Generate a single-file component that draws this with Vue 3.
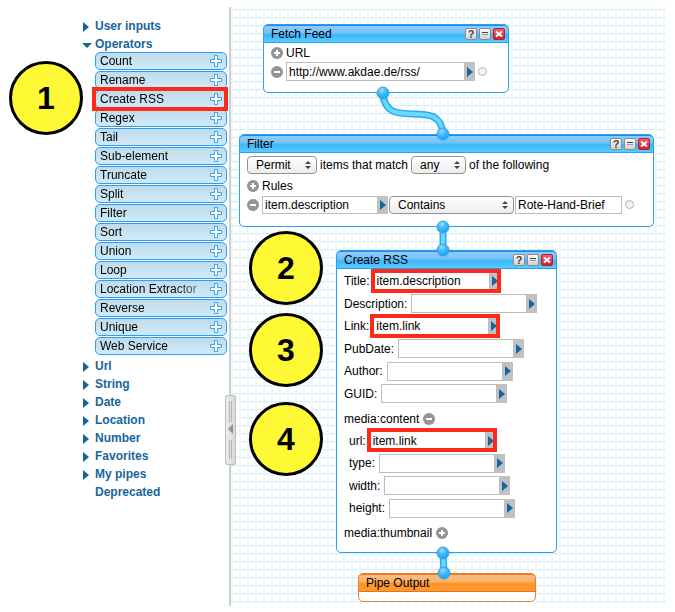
<script setup>
import { ref, reactive } from 'vue'

const operators = ['Count', 'Rename', 'Create RSS', 'Regex', 'Tail', 'Sub-element', 'Truncate', 'Split', 'Filter', 'Sort', 'Union', 'Loop', 'Location Extractor', 'Reverse', 'Unique', 'Web Service']
const categories = ['Url', 'String', 'Date', 'Location', 'Number', 'Favorites', 'My pipes']
const open = ref(true)

const feedUrl = ref('http://www.akdae.de/rss/')
const mode = ref('Permit')
const match = ref('any')
const rule = reactive({ field: 'item.description', op: 'Contains', value: 'Rote-Hand-Brief' })
const fields = reactive([
  { label: 'Title', value: 'item.description', marked: true },
  { label: 'Description', value: '' },
  { label: 'Link', value: 'item.link', marked: true },
  { label: 'PubDate', value: '' },
  { label: 'Author', value: '' },
  { label: 'GUID', value: '' }
])
const media = reactive([
  { label: 'url', value: 'item.link', marked: true },
  { label: 'type', value: '' },
  { label: 'width', value: '' },
  { label: 'height', value: '' }
])
const modules = [
  { id: 'fetch', title: 'Fetch Feed' },
  { id: 'filter', title: 'Filter' },
  { id: 'rss', title: 'Create RSS' },
  { id: 'output', title: 'Pipe Output' }
]
const ports = [[152, 86], [212, 127], [212, 220], [212, 243], [212, 546], [213, 566]]
const wires = ['M152 86C154 127 209 87 212 127', 'M212 220V243', 'M212 546L213 566']
</script>

<template>
  <div class="page">
    <nav class="sidebar">
      <button class="cat" type="button">
        <svg class="tri" viewBox="0 0 10 10"><path d="M1 0L7 5L1 10Z" /></svg>User inputs
      </button>
      <button class="cat" type="button" @click="open = !open">
        <svg class="tri" viewBox="0 0 10 10"><path d="M0 3H10L5 8Z" /></svg>Operators
      </button>
      <ul v-if="open" class="ops">
        <li v-for="op in operators" :key="op">
          <button type="button" class="op" :class="{ marked: op === 'Create RSS' }">
            <span class="op-name">{{ op }}</span>
            <svg class="plus" viewBox="0 0 12 12"><path d="M4.500 .5H7.500V4.500H11.500V7.500H7.500V11.500H4.500V7.500H.5V4.500H4.500Z" /></svg>
          </button>
        </li>
      </ul>
      <button v-for="c in categories" :key="c" class="cat" type="button">
        <svg class="tri" viewBox="0 0 10 10"><path d="M1 0L7 5L1 10Z" /></svg>{{ c }}
      </button>
      <button class="cat" type="button"><span class="tri"></span>Deprecated</button>
    </nav>

    <div class="divider">
      <button class="handle" type="button" aria-label="Collapse">
        <svg viewBox="0 0 11 70">
          <path d="M4.500 6V27M6.500 6V27M4.500 45V64M6.500 45V64" stroke="#b4b4b4" />
          <path d="M8 29V39L3 34Z" fill="#929292" />
        </svg>
      </button>
    </div>

    <main class="canvas">
      <section v-for="m in modules" :key="m.id" class="module" :class="m.id">
        <header class="head">
          <h2>{{ m.title }}</h2>
          <div v-if="m.id !== 'output'" class="tools">
            <button type="button" class="tool" aria-label="Help">?</button>
            <button type="button" class="tool" aria-label="Minimize">
              <svg viewBox="0 0 10 10"><path d="M2 3.500H8" stroke="#444" /><path d="M2 5.500H8" stroke="#999" /></svg>
            </button>
            <button type="button" class="tool close" aria-label="Close">
              <svg viewBox="0 0 10 10"><path d="M2 2.500L8 7.500M8 2.500L2 7.500" stroke="#fff" stroke-width="2" fill="none" /></svg>
            </button>
          </div>
        </header>

        <div v-if="m.id === 'fetch'" class="body">
          <div class="row">
            <button class="round" type="button" aria-label="Add URL"><svg viewBox="0 0 12 12"><circle cx="6" cy="6" r="6" /><path d="M6 3V9M3 6H9" /></svg></button>
            <label for="feed">URL</label>
          </div>
          <div class="row">
            <button class="round" type="button" aria-label="Remove URL"><svg viewBox="0 0 12 12"><circle cx="6" cy="6" r="6" /><path d="M3 6H9" /></svg></button>
            <span class="field wide"><input id="feed" v-model="feedUrl" type="text"><button class="go" type="button" aria-label="Choose"><svg viewBox="0 0 6 10"><path d="M0 0L6 5L0 10Z" /></svg></button></span>
            <span class="socket"></span>
          </div>
        </div>

        <div v-else-if="m.id === 'filter'" class="body">
          <div class="row match">
            <span class="pick mode"><select v-model="mode" aria-label="Mode"><option>Permit</option><option>Block</option></select><svg viewBox="0 0 6 8"><path d="M0 3L3 0L6 3ZM0 5L3 8L6 5Z" /></svg></span>
            <span>items that match</span>
            <span class="pick any"><select v-model="match" aria-label="Match"><option>any</option><option>all</option></select><svg viewBox="0 0 6 8"><path d="M0 3L3 0L6 3ZM0 5L3 8L6 5Z" /></svg></span>
            <span>of the following</span>
          </div>
          <div class="row">
            <button class="round" type="button" aria-label="Add rule"><svg viewBox="0 0 12 12"><circle cx="6" cy="6" r="6" /><path d="M6 3V9M3 6H9" /></svg></button>
            <span>Rules</span>
          </div>
          <div class="row">
            <button class="round" type="button" aria-label="Remove rule"><svg viewBox="0 0 12 12"><circle cx="6" cy="6" r="6" /><path d="M3 6H9" /></svg></button>
            <div class="rule">
              <span class="field"><input v-model="rule.field" type="text" aria-label="Field"><button class="go" type="button" aria-label="Choose"><svg viewBox="0 0 6 10"><path d="M0 0L6 5L0 10Z" /></svg></button></span>
              <span class="pick test"><select v-model="rule.op" aria-label="Test"><option>Contains</option><option>Matches</option></select><svg viewBox="0 0 6 8"><path d="M0 3L3 0L6 3ZM0 5L3 8L6 5Z" /></svg></span>
              <span class="field value"><input v-model="rule.value" type="text" aria-label="Value"></span>
            </div>
            <span class="socket"></span>
          </div>
        </div>

        <div v-else-if="m.id === 'rss'" class="body">
          <div v-for="f in fields" :key="f.label" class="row">
            <label :for="f.label">{{ f.label }}:</label>
            <span class="field" :class="{ marked: f.marked }"><input :id="f.label" v-model="f.value" type="text"><button class="go" type="button" aria-label="Choose"><svg viewBox="0 0 6 10"><path d="M0 0L6 5L0 10Z" /></svg></button></span>
          </div>
          <div class="row group">
            <span>media:content</span>
            <button class="round" type="button" aria-label="Collapse content"><svg viewBox="0 0 12 12"><circle cx="6" cy="6" r="6" /><path d="M3 6H9" /></svg></button>
          </div>
          <div v-for="f in media" :key="f.label" class="row nested">
            <label :for="f.label">{{ f.label }}:</label>
            <span class="field" :class="{ marked: f.marked }"><input :id="f.label" v-model="f.value" type="text"><button class="go" type="button" aria-label="Choose"><svg viewBox="0 0 6 10"><path d="M0 0L6 5L0 10Z" /></svg></button></span>
          </div>
          <div class="row group">
            <span>media:thumbnail</span>
            <button class="round" type="button" aria-label="Expand thumbnail"><svg viewBox="0 0 12 12"><circle cx="6" cy="6" r="6" /><path d="M6 3V9M3 6H9" /></svg></button>
          </div>
        </div>
        <div v-else class="body"></div>
      </section>

      <svg class="wires">
        <defs>
          <radialGradient id="ball" cx="40%" cy="28%" r="70%">
            <stop offset="0" stop-color="#9bdcff" />
            <stop offset=".5" stop-color="#3db8fb" />
            <stop offset="1" stop-color="#1ea4f6" />
          </radialGradient>
        </defs>
        <template v-for="w in wires" :key="w">
          <path :d="w" stroke="#37a3ee" stroke-width="7" />
          <path :d="w" stroke="#63dcff" stroke-width="4" />
        </template>
        <circle v-for="(p, i) in ports" :key="i" :cx="p[0]" :cy="p[1]" r="6" fill="url(#ball)" stroke="#35a2f0" />
      </svg>

      <span class="step s2">2</span>
      <span class="step s3">3</span>
      <span class="step s4">4</span>
    </main>
    <span class="step s1">1</span>
  </div>
</template>

<style>
body { margin: 0; background: #fff; }
</style>

<style scoped>
.page {
  position: relative;
  display: flex;
  box-sizing: border-box;
  min-height: 100vh;
  padding: 7px 9px 6px 0;
  font: 12px/18px "Liberation Sans", Arial, sans-serif;
  color: #000;
}
button, input, select { font: inherit; color: inherit; margin: 0; padding: 0; border: 0; background: none; box-sizing: border-box; }
svg { display: block; }

.sidebar { flex: none; width: 229px; box-sizing: border-box; padding: 10px 2px 0 82px; }
.cat { display: flex; align-items: center; gap: 3px; width: 100%; padding-top: 1px; line-height: 17px; font-weight: bold; color: #17659d; text-align: left; }
.tri { width: 10px; height: 10px; fill: #17659d; }
.ops { list-style: none; margin: -1px 0 2px 13px; padding: 0; display: grid; gap: 1px; }
.op {
  position: relative;
  display: flex;
  align-items: center;
  justify-content: space-between;
  width: 100%;
  height: 18px;
  padding: 0 4px;
  border: 1px solid #2a9df4;
  border-radius: 5px;
  background: linear-gradient(#bfdae8, #cfeafa);
  line-height: 16px;
}
.op-name { width: 104px; text-align: left; white-space: nowrap; mask-image: linear-gradient(90deg, #000 70%, transparent 115%); }
.plus { width: 12px; height: 12px; fill: #fff; stroke: #3da3ee; }
.marked { position: relative; }
.marked::after { content: ""; position: absolute; inset: -3px -1px -2px -3px; border: 4px solid #fd2a1b; pointer-events: none; }
.op.marked { z-index: 1; }
.op.marked::after { inset: -4px -2px -4px -4px; }

.divider { position: relative; flex: none; width: 2px; background: #cfcfd1; }
.handle { position: absolute; z-index: 2; left: -4px; top: 388px; width: 11px; height: 70px; border-radius: 3px; background: linear-gradient(90deg, #eee, #d6d6d6); box-shadow: inset 0 0 0 1px #bdbdbd; }
.handle svg { width: 11px; height: 70px; }

.canvas {
  position: relative;
  flex: 1;
  min-height: 599px;
  background-color: #fff;
  background-image:
    linear-gradient(#fff 2px, transparent 2px),
    linear-gradient(90deg, #e6f5fa 2px, transparent 2px 7px, #fff 7px),
    linear-gradient(#cdeaf3 1px, transparent 1px);
  background-size: 8px 8px;
  background-position: 0 5px, 0 0, 0 2px;
}
.module { position: absolute; box-sizing: border-box; border: 1px solid #2a9df4; border-radius: 5px; background: #fff; }
.fetch { left: 32px; top: 17px; width: 246px; }
.filter { left: 8px; top: 127px; width: 415px; }
.rss { left: 105px; top: 243px; width: 221px; }
.output { left: 127px; top: 566px; width: 178px; border-color: #f28024; }
.head {
  display: flex;
  justify-content: space-between;
  align-items: center;
  height: 18px;
  padding: 0 3px 0 7px;
  box-sizing: border-box;
  border-top: 1px solid #1c8af2;
  border-bottom: 1px solid #2a9df4;
  border-radius: 4px 4px 0 0;
  background: linear-gradient(#93cbf5, #74c4fa 40%, #3fb6fd 55%, #57cdff);
}
.head h2 { margin: 0; font-size: 12px; font-weight: normal; line-height: 16px; }
.output .head { border-color: #f07018; background: linear-gradient(#f8bd86, #fbb36b 40%, #ff9223 55%, #ff9c35); }
.output .body { height: 9px; padding: 0; }
.tools { display: flex; gap: 2px; }
.tool { width: 12px; height: 12px; border: 1px solid #8d8d8d; border-radius: 2px; background: linear-gradient(#fafafa, #d2d2d2); font-size: 11px; font-weight: bold; line-height: 10px; color: #444; }
.tool svg { width: 10px; height: 10px; }
.close { border-color: #b3202f; background: linear-gradient(#f0606a, #d81c2c); }

.body { padding: 0 7px 11px; }
.row { display: flex; align-items: center; gap: 3px; min-height: 19px; }
.round { flex: none; width: 12px; height: 12px; }
.round svg { width: 12px; height: 12px; fill: #949494; stroke: none; }
.round path { stroke: #fff; stroke-width: 2; }
.field { display: flex; height: 19px; }
.field input { width: 116px; height: 100%; padding: 0 2px; border: 1px solid #bdbdbd; background: #fff; }
.wide input { width: 179px; }
.value input { width: 107px; }
.go { display: flex; align-items: center; width: 10px; height: 100%; padding-left: 2px; background: #c1c1c1; }
.go svg { width: 6px; height: 10px; fill: #17659d; }
.socket { width: 9px; height: 9px; box-sizing: border-box; border: 1px solid #b5b5b5; border-radius: 50%; background: #f2f2f2; }

.filter .body { padding: 1px 7px 12px; }
.filter .match { min-height: 22px; }
.rule { display: flex; gap: 1px; }
.rule .field { height: 18px; }
.pick { position: relative; display: block; height: 18px; }
.pick select { appearance: none; display: block; width: 100%; height: 18px; padding: 0 8px; border: 1px solid #929292; border-radius: 4px; background: linear-gradient(#fff, #f6f6f6 50%, #ececec); line-height: 16px; }
.pick svg { position: absolute; right: 6px; top: 5px; width: 6px; height: 8px; fill: #444; pointer-events: none; }
.mode { width: 70px; }
.any { width: 55px; }
.test { width: 125px; }

.rss .body { padding: 1px 7px 9px; }
.rss .row { gap: 4px; min-height: 22px; }
.rss .row:nth-child(even) { min-height: 23px; }
.rss .row.group { min-height: 20px; margin-top: 4px; }
.rss .nested { padding-left: 5px; }

.wires { position: absolute; inset: 0; width: 100%; height: 100%; fill: none; pointer-events: none; }
.step {
  position: absolute;
  z-index: 3;
  box-sizing: border-box;
  width: 74px;
  height: 74px;
  border: 3px solid #000;
  border-radius: 50%;
  background: #fff935;
  font-size: 32px;
  font-weight: bold;
  line-height: 68px;
  text-align: center;
}
.s1 { left: 9px; top: 61px; }
.s2 { left: 18px; top: 224px; }
.s3 { left: 18px; top: 306px; }
.s4 { left: 18px; top: 395px; }
</style>
